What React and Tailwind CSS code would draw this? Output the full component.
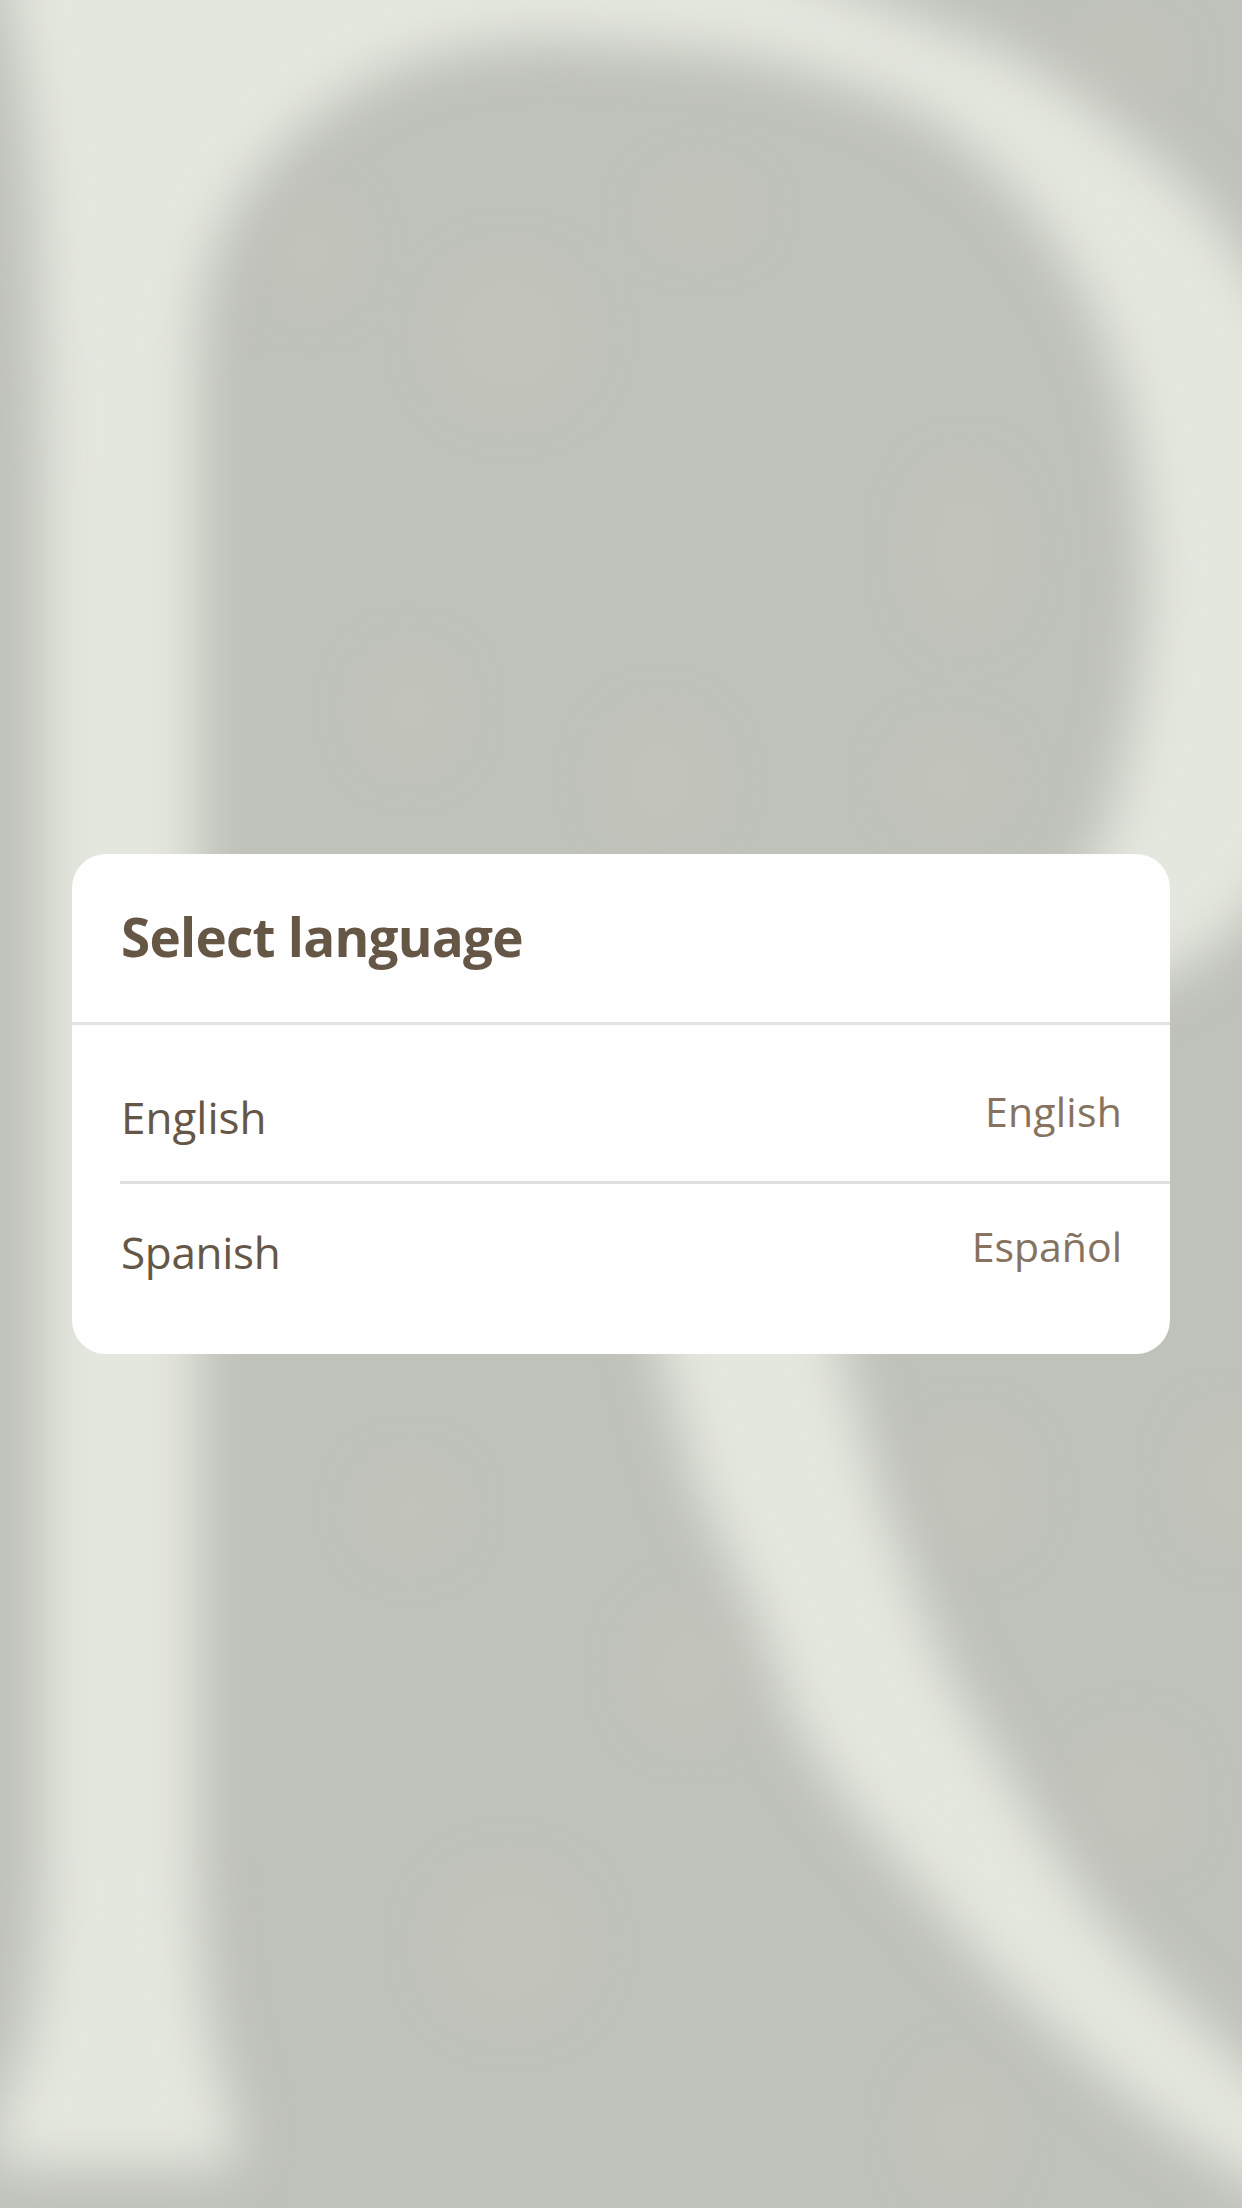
const languages = [
  { name: 'English', native: 'English', nameTracking: 'tracking-[0px]', nativeTracking: 'tracking-[0.2px]' },
  { name: 'Spanish', native: 'Español', nameTracking: 'tracking-[-0.3px]', nativeTracking: 'tracking-[0px]' },
];

function Backdrop() {
  return (
    <svg className="absolute inset-0 h-full w-full" viewBox="0 0 1242 2208" aria-hidden="true">
      <defs>
        <filter id="soft" filterUnits="userSpaceOnUse" x="-200" y="-200" width="1642" height="2608" colorInterpolationFilters="sRGB">
          <feGaussianBlur stdDeviation="26" />
        </filter>
      </defs>
      <rect width="1242" height="2208" fill="#bfc2ba" />
      <g fill="#c5c4bc" opacity="0.6" filter="url(#soft)">
        <ellipse cx="510" cy="335" rx="70" ry="70" />
        <ellipse cx="310" cy="250" rx="40" ry="50" />
        <ellipse cx="700" cy="210" rx="45" ry="30" />
        <ellipse cx="965" cy="550" rx="45" ry="80" />
        <ellipse cx="410" cy="710" rx="40" ry="50" />
        <ellipse cx="660" cy="780" rx="50" ry="60" />
        <ellipse cx="950" cy="780" rx="50" ry="40" />
        <ellipse cx="410" cy="1510" rx="40" ry="40" />
        <ellipse cx="690" cy="1670" rx="50" ry="60" />
        <ellipse cx="510" cy="1945" rx="70" ry="70" />
        <ellipse cx="970" cy="1490" rx="50" ry="60" />
        <ellipse cx="1130" cy="1800" rx="50" ry="60" />
        <ellipse cx="960" cy="2130" rx="40" ry="60" />
        <ellipse cx="1230" cy="1480" rx="40" ry="60" />
        <ellipse cx="1120" cy="60" rx="50" ry="30" />
      </g>
      <g fill="#e4e7de" filter="url(#soft)">
        <path
          fillRule="evenodd"
          d="M0 -120 L8 0 L23 77 L36 191 L42 383 L43 500 V1850 C43 1990 26 2080 -4 2110 V2168 H234 V2115 C212 2070 198 1980 197 1850 V1000 H1100 L1180 970 L1240 925 L1300 840 L1340 700 C1370 500 1320 370 1242 260 L1216 222 L1178 180 L1128 138 L1071 92 L1005 52 L948 30 L856 -6 L600 -120 Z M198 1000 V360 L200 306 L213 249 L243 191 L297 130 L364 82 L440 52 L536 39 L642 46 L720 52 L795 67 L891 98 L948 130 L1009 184 L1051 238 L1090 302 L1116 367 L1132 429 L1143 517 L1147 600 L1135 713 L1110 823 L1065 920 L1000 1000 Z"
        />
        <path d="M610 1100 L661 1355 L697 1487 L757 1616 L795 1723 L845 1799 L910 1876 L986 1964 L1048 2025 L1113 2083 L1178 2136 L1242 2176 L1320 2220 V2130 L1242 2065 L1205 2029 L1159 1983 L1101 1920 L1055 1853 L1006 1773 L956 1690 L925 1619 L880 1495 L841 1355 L795 1100 Z" />
      </g>
    </svg>
  );
}

function LanguageRow({ language, last }) {
  return (
    <li className={last ? 'ml-12 flex h-[135px] justify-between pr-12' : 'ml-12 flex h-[135px] justify-between border-b-[3px] border-[#dedede] pr-12'}>
      <span className={`pt-[38px] pl-px text-[44px] leading-[60px] text-[#665645] ${language.nameTracking}`}>{language.name}</span>
      <span className={`pt-[32px] text-[41px] leading-[60px] text-[#86725e] ${language.nativeTracking}`}>{language.native}</span>
    </li>
  );
}

export default function App() {
  return (
    <main className="relative flex h-[2208px] w-[1242px] items-center justify-center overflow-hidden bg-[#bfc2ba] font-['Open_Sans',sans-serif]">
      <Backdrop />
      <section className="relative h-[500px] w-[1098px] overflow-hidden rounded-[34px] bg-[#fefefe]">
        <h1 className="h-[171px] border-b-[3px] border-[#e3e3e3] pt-[47px] pl-[49px] text-[53px] leading-[72px] font-bold tracking-[-0.75px] text-[#665645]">
          Select language
        </h1>
        <ul className="pt-6">
          {languages.map((language, index) => (
            <LanguageRow key={language.name} language={language} last={index === languages.length - 1} />
          ))}
        </ul>
      </section>
    </main>
  );
}
